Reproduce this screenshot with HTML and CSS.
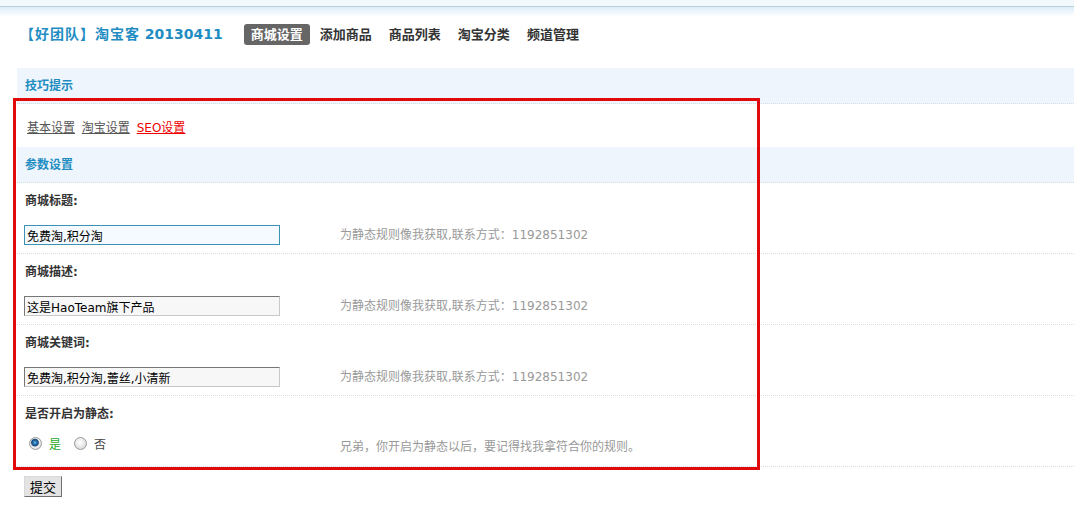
FILE: index.html
```html
<!DOCTYPE html>
<html lang="zh-CN">
<head>
<meta charset="utf-8">
<title>商城设置</title>
<link rel="stylesheet" href="styles.css">
</head>
<body>
<div class="topbar"></div>
<div class="header">
  <h1 class="logo"><span class="logo-cn">【好团队】淘宝客</span> 20130411</h1>
  <ul class="nav">
    <li class="nav-item active">商城设置</li>
    <li class="nav-item">添加商品</li>
    <li class="nav-item">商品列表</li>
    <li class="nav-item">淘宝分类</li>
    <li class="nav-item">频道管理</li>
  </ul>
</div>
<div class="content">
  <div class="section-head">技巧提示</div>
  <div class="tabs">
    <a class="tab" href="#">基本设置</a>
    <a class="tab" href="#">淘宝设置</a>
    <a class="tab tab-current" href="#">SEO设置</a>
  </div>
  <div class="section-head">参数设置</div>
  <div class="row">
    <div class="row-label">商城标题:</div>
    <div class="row-field">
      <div class="field-cell"><input class="text-input focused" type="text" value="免费淘,积分淘"></div>
      <div class="hint">为静态规则像我获取,联系方式：1192851302</div>
    </div>
  </div>
  <div class="row">
    <div class="row-label">商城描述:</div>
    <div class="row-field">
      <div class="field-cell"><input class="text-input" type="text" value="这是HaoTeam旗下产品"></div>
      <div class="hint">为静态规则像我获取,联系方式：1192851302</div>
    </div>
  </div>
  <div class="row">
    <div class="row-label">商城关键词:</div>
    <div class="row-field">
      <div class="field-cell"><input class="text-input" type="text" value="免费淘,积分淘,蕾丝,小清新"></div>
      <div class="hint">为静态规则像我获取,联系方式：1192851302</div>
    </div>
  </div>
  <div class="row">
    <div class="row-label">是否开启为静态:</div>
    <div class="row-field">
      <div class="field-cell radios">
        <label class="radio-label yes"><input class="radio" type="radio" name="static" checked><span>是</span></label>
        <label class="radio-label"><input class="radio" type="radio" name="static"><span>否</span></label>
      </div>
      <div class="hint hint-radio">兄弟，你开启为静态以后，要记得找我拿符合你的规则。</div>
    </div>
  </div>
  <button class="submit" type="button">提交</button>
</div>
<div class="highlight-box"></div>
</body>
</html>
```

FILE: styles.css
```css
html, body {
  margin: 0;
  padding: 0;
  background: #fff;
}
body {
  position: relative;
  font-family: "DejaVu Sans", "Noto Sans CJK SC", sans-serif;
  font-size: 12px;
  color: #333;
  width: 1074px;
  height: 509px;
  overflow: hidden;
}
.topbar {
  height: 6px;
  background: #f2f8fc;
  border-bottom: 1px solid #b9d2da;
}
.header {
  display: flex;
  align-items: center;
  padding: 17px 0 23px 20px;
  height: 21px;
  background: linear-gradient(#deedf9 0, #ffffff 10px);
}
.logo {
  margin: 0;
  font-size: 14px;
  font-weight: bold;
  color: #1f8dc2;
  line-height: 21px;
  white-space: nowrap;
}
.logo-cn {
  letter-spacing: 1px;
}
.nav {
  display: flex;
  list-style: none;
  margin: 0 0 0 21px;
  padding: 0;
}
.nav-item {
  padding: 0 7px;
  margin-right: 3px;
  height: 21px;
  line-height: 21px;
  font-size: 13px;
  font-weight: bold;
  color: #333;
  border-radius: 3px;
}
.nav-item.active {
  background: #666;
  color: #fff;
}
.content {
  padding-left: 17px;
}
.section-head {
  height: 33px;
  padding-top: 2px;
  line-height: 33px;
  padding-left: 8px;
  background: #eef5fc;
  border-bottom: 1px dotted #d3dde6;
  font-weight: bold;
  color: #1f8dc2;
}
.tabs {
  padding: 16px 0 11px 10px;
  line-height: 16px;
}
.tab {
  color: #555;
  text-decoration: underline;
  margin-right: 3px;
}
.tab-current {
  color: #e00;
}
.row {
  border-bottom: 1px dotted #d3dde6;
}
.row-label {
  height: 33px;
  padding-top: 2px;
  line-height: 33px;
  padding-left: 8px;
  font-weight: bold;
  color: #333;
}
.row-field {
  display: flex;
  align-items: flex-start;
  height: 35px;
  padding-left: 7px;
}
.field-cell {
  width: 316px;
  padding-top: 7px;
}
.text-input {
  display: block;
  box-sizing: border-box;
  width: 256px;
  height: 20px;
  margin: 0;
  padding: 1px 2px 0;
  font-family: "DejaVu Sans", "Noto Sans CJK SC", sans-serif;
  font-size: 12px;
  color: #000;
  background: #f7f7f7;
  border: 1px solid;
  border-color: #767676 #c8c8c8 #c8c8c8 #767676;
  outline: none;
}
.text-input.focused {
  background: #f4faff;
  border-color: #3b93b3;
}
.hint {
  margin-top: 9px;
  line-height: 16px;
  color: #999;
  white-space: nowrap;
}
.hint-radio {
  margin-top: 8px;
}
.radios {
  display: flex;
  align-items: center;
  padding-top: 5px;
  height: 14px;
}
.radio-label {
  display: flex;
  align-items: center;
  margin-right: 8px;
  color: #444;
}
.radio-label.yes {
  color: #1fa81f;
}
.radio {
  -webkit-appearance: none;
  appearance: none;
  box-sizing: border-box;
  width: 13px;
  height: 13px;
  margin: 0 7px 0 5px;
  border-radius: 50%;
  border: 1px solid #9a9a9a;
  background: radial-gradient(circle at 45% 40%, #ffffff 0, #eeeeee 40%, #c9c9c9 100%);
}
.radio:checked {
  background: radial-gradient(circle at 45% 42%, #7cc4ef 0, #2a76b0 1.6px, #144a7c 3.4px, #d9d9d9 4.2px, #f0f0f0 5px, #bdbdbd 100%);
}
.submit {
  display: block;
  margin: 9px 0 0 7px;
  height: 21px;
  padding: 0 5px;
  font-family: "Noto Sans CJK SC", sans-serif;
  font-size: 13px;
  line-height: 17px;
  color: #000;
  background: #e3e3e3;
  border: 1px solid;
  border-color: #d8d8d8 #707070 #707070 #d8d8d8;
  border-radius: 0;
}
.highlight-box {
  position: absolute;
  left: 13px;
  top: 98px;
  width: 741px;
  height: 366px;
  border: 3px solid #e10a0a;
  pointer-events: none;
}
```
